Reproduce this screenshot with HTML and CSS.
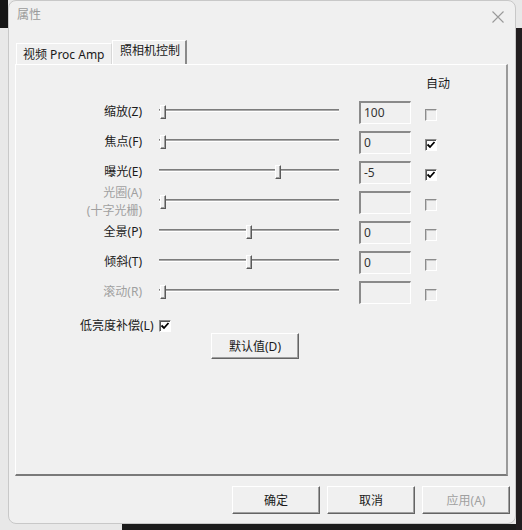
FILE: index.html
```html
<!DOCTYPE html>
<html lang="zh-CN">
<head>
    <meta charset="UTF-8">
    <title>属性</title>
    <link rel="stylesheet" href="styles.css">
</head>
<body>
    <div class="dialog">
        <div class="titlebar">
            <span class="title">属性</span>
            <svg class="close" width="12" height="12" viewBox="0 0 12 12">
                <path d="M0.5 0.5 L11.5 11.5 M11.5 0.5 L0.5 11.5" stroke="#9a9a9a" stroke-width="1.1" fill="none"/>
            </svg>
        </div>

        <div class="tabs">
            <div class="tab">视频 Proc Amp</div>
            <div class="tab active">照相机控制</div>
        </div>

        <div class="panel">
            <div class="auto-head">自动</div>

            <div class="rows">
                <div class="row">
                    <div class="label">缩放(Z)</div>
                    <div class="slider"><div class="track"></div><div class="thumb" style="left: 1px"></div></div>
                    <div class="edit">100</div>
                    <div class="check"></div>
                </div>
                <div class="row">
                    <div class="label">焦点(F)</div>
                    <div class="slider"><div class="track"></div><div class="thumb" style="left: 1px"></div></div>
                    <div class="edit">0</div>
                    <div class="check checked">
                        <svg width="10" height="10" viewBox="0 0 10 10"><path d="M1.5 4.5 L4 7 L8.5 2" stroke="#000" stroke-width="1.8" fill="none"/></svg>
                    </div>
                </div>
                <div class="row">
                    <div class="label">曝光(E)</div>
                    <div class="slider"><div class="track"></div><div class="thumb" style="left: 116px"></div></div>
                    <div class="edit">-5</div>
                    <div class="check checked">
                        <svg width="10" height="10" viewBox="0 0 10 10"><path d="M1.5 4.5 L4 7 L8.5 2" stroke="#000" stroke-width="1.8" fill="none"/></svg>
                    </div>
                </div>
                <div class="row disabled">
                    <div class="label">光圈(A)<br>(十字光栅)</div>
                    <div class="slider"><div class="track"></div><div class="thumb" style="left: 1px"></div></div>
                    <div class="edit"></div>
                    <div class="check"></div>
                </div>
                <div class="row">
                    <div class="label">全景(P)</div>
                    <div class="slider"><div class="track"></div><div class="thumb" style="left: 87px"></div></div>
                    <div class="edit">0</div>
                    <div class="check"></div>
                </div>
                <div class="row">
                    <div class="label">倾斜(T)</div>
                    <div class="slider"><div class="track"></div><div class="thumb" style="left: 87px"></div></div>
                    <div class="edit">0</div>
                    <div class="check"></div>
                </div>
                <div class="row disabled">
                    <div class="label">滚动(R)</div>
                    <div class="slider"><div class="track"></div><div class="thumb" style="left: 1px"></div></div>
                    <div class="edit"></div>
                    <div class="check"></div>
                </div>
            </div>

            <div class="backlight">
                <span>低亮度补偿(L)</span>
                <div class="check checked">
                    <svg width="10" height="10" viewBox="0 0 10 10"><path d="M1.5 4.5 L4 7 L8.5 2" stroke="#000" stroke-width="1.8" fill="none"/></svg>
                </div>
            </div>

            <button class="btn default-btn">默认值(D)</button>
        </div>

        <div class="footer">
            <button class="btn">确定</button>
            <button class="btn">取消</button>
            <button class="btn disabled">应用(A)</button>
        </div>
    </div>
</body>
</html>
```

FILE: styles.css
```css
* {
    box-sizing: border-box;
}

body {
    margin: 0;
    width: 522px;
    height: 530px;
    overflow: hidden;
    font-family: "Noto Sans", "Noto Sans CJK SC", sans-serif;
    font-size: 12px;
    color: #1a1a1a;
    background:
        linear-gradient(#151515, #151515) 0 0 / 8px 28px no-repeat,
        linear-gradient(#221e20, #221e20) 516px 28px / 6px 502px no-repeat,
        linear-gradient(#1c1c1c, #1c1c1c) 122px 524px / 400px 6px no-repeat,
        #e8e8e8;
}

.dialog {
    margin-left: 8px;
    width: 508px;
    height: 524px;
    background-color: #f0f0f0;
    border: 1px solid #c8c8c8;
    border-radius: 8px;
    overflow: hidden;
}

.titlebar {
    height: 39px;
    padding: 5px 8px 0 8px;
    display: flex;
    justify-content: space-between;
    align-items: flex-start;
}

.title {
    color: #9a9a9a;
    line-height: 18px;
}

.close {
    margin-top: 5px;
    margin-right: 3px;
}

/* tabs */
.tabs {
    height: 24px;
    margin-left: 7px;
    display: flex;
    align-items: flex-end;
}

.tab {
    height: 21px;
    padding-left: 6px;
    width: 96px;
    line-height: 21px;
    border-top: 1px solid #fff;
    border-left: 1px solid #fff;
    border-right: 1px solid #d8d8d8;
    white-space: nowrap;
}

.tab.active {
    height: 24px;
    width: 75px;
    padding-left: 7px;
    line-height: 20px;
    border-right: 2px solid #8a8a8a;
}

/* page */
.panel {
    margin-left: 6px;
    width: 493px;
    height: 412px;
    border-top: 1px solid #fff;
    border-left: 1px solid #fff;
    border-right: 2px solid #9a9a9a;
    border-bottom: 2px solid #7a7a7a;
    padding-top: 10px;
}

.auto-head {
    margin-left: 410px;
    line-height: 18px;
}

.rows {
    margin-top: 8px;
    display: flex;
    flex-direction: column;
    gap: 7px;
}

.row {
    height: 23px;
    display: flex;
    align-items: center;
}

.label {
    width: 126px;
    margin-top: -2px;
    text-align: right;
    line-height: 18px;
    white-space: nowrap;
}

.slider {
    position: relative;
    width: 180px;
    height: 23px;
    margin-left: 17px;
}

.track {
    margin-top: 8px;
    height: 3px;
    border-top: 1px solid #7c7c7c;
    border-bottom: 1px solid #fff;
    background-color: #a8a8a8;
}

.thumb {
    position: absolute;
    top: 4px;
    width: 6px;
    height: 14px;
    background-color: #f0f0f0;
    border-top: 1px solid #fff;
    border-left: 1px solid #fff;
    border-right: 1px solid #5a5a5a;
    border-bottom: 1px solid #5a5a5a;
    box-shadow: inset -1px -1px 0 #a0a0a0;
}

.edit {
    width: 52px;
    height: 23px;
    margin-left: 20px;
    padding-left: 3px;
    line-height: 20px;
    color: #333;
    border-top: 2px solid #8a8a8a;
    border-left: 2px solid #8a8a8a;
    border-right: 1px solid #fff;
    border-bottom: 1px solid #fff;
}

.check {
    width: 12px;
    height: 12px;
    margin-left: 14px;
    margin-top: 5px;
    background-color: #f0f0f0;
    border-top: 1px solid #8c8c8c;
    border-left: 1px solid #8c8c8c;
    border-right: 1px solid #fff;
    border-bottom: 1px solid #fff;
    box-shadow: inset 1px 1px 0 #c8c8c8;
    display: flex;
    align-items: center;
    justify-content: center;
}

.check.checked {
    background-color: #fff;
    box-shadow: inset 1px 1px 0 #555;
}

.disabled,
.disabled .label,
.disabled .edit {
    color: #a0a0a0;
}

.backlight {
    margin-top: 14px;
    padding-left: 64px;
    display: flex;
    align-items: center;
    line-height: 16px;
}

.backlight .check {
    margin: 0 0 0 5px;
}

/* buttons */
.btn {
    font-family: inherit;
    font-size: 12px;
    color: #1a1a1a;
    background-color: #f0f0f0;
    width: 88px;
    height: 28px;
    padding: 0;
    border-top: 1px solid #fff;
    border-left: 1px solid #fff;
    border-right: 1px solid #646464;
    border-bottom: 1px solid #646464;
    box-shadow: inset -1px -1px 0 #a0a0a0;
}

.default-btn {
    display: block;
    height: 26px;
    margin: -1px 0 0 195px;
}

.btn.disabled {
    color: #a0a0a0;
}

.footer {
    margin-top: 10px;
    padding-right: 5px;
    display: flex;
    justify-content: flex-end;
    gap: 7px;
}
```
